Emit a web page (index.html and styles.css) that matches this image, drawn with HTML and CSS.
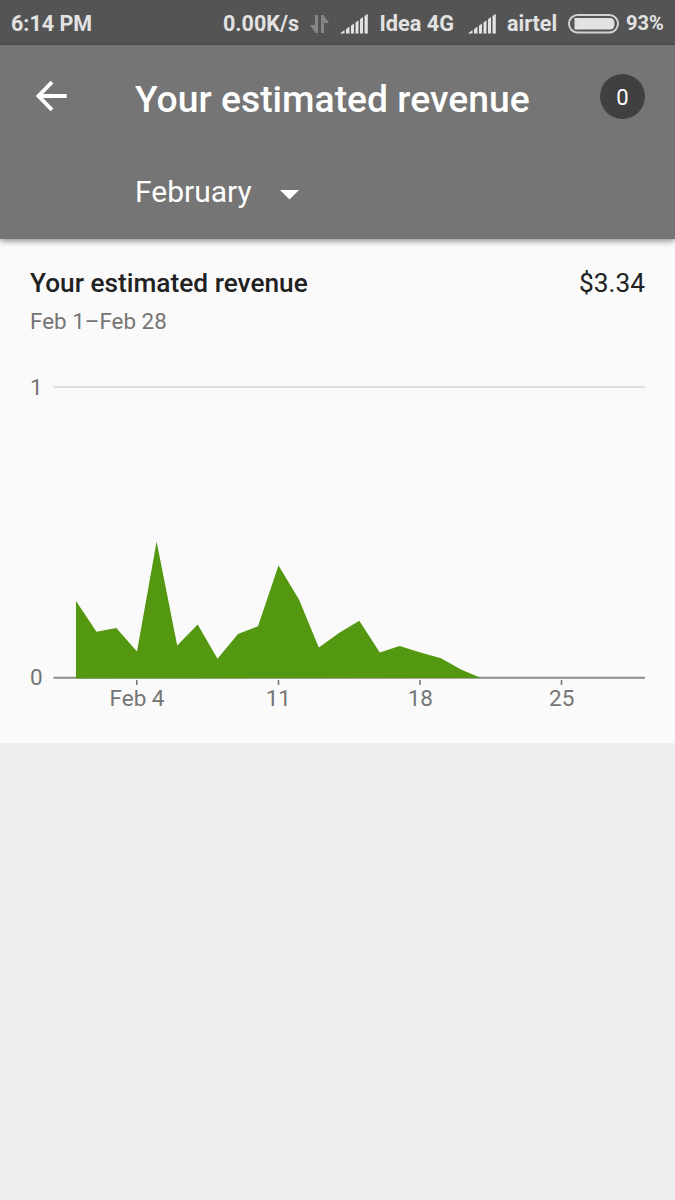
FILE: index.html
```html
<!DOCTYPE html>
<html lang="en">
<head>
<meta charset="utf-8">
<title>Your estimated revenue</title>
<link rel="stylesheet" href="styles.css">
</head>
<body>
<div class="status">
  <span class="clock">6:14 PM</span>
  <span class="rate">0.00K/s</span>
  <svg class="transfer" width="20" height="20" viewBox="0 0 20 20"><path d="M8 1v18H5.500L0 11h5V1zM11 19V1h2.500L19 9h-5v10z"/></svg>
  <svg class="signal" width="28" height="20" viewBox="0 0 28 20"><path d="M0 19.500 4.500 16v3.500zM6 15.300l3.500-2.700v6.900H6zM11 11.800l3-2.400v10.100h-3zM15.500 8.600l3-2.300v13.200h-3zM20 5.200l3-2.300v16.600h-3zM24.500 1.900 27.800 0v19.500h-3.300z"/></svg>
  <span class="carrier">Idea 4G</span>
  <svg class="signal" width="28" height="20" viewBox="0 0 28 20"><path d="M0 19.500 4.500 16v3.500zM6 15.300l3.500-2.700v6.900H6zM11 11.800l3-2.400v10.100h-3zM15.500 8.600l3-2.300v13.200h-3zM20 5.200l3-2.300v16.600h-3zM24.500 1.900 27.800 0v19.500h-3.300z"/></svg>
  <span class="carrier second">airtel</span>
  <svg class="battery" width="51" height="20" viewBox="0 0 51 20"><rect x="1" y="1" width="49" height="17.500" rx="8.700"/><path d="M6.500 4H42q4.500 0 4.500 5.700T42 15.500H6.500z"/></svg>
  <span class="percent">93%</span>
</div>
<header class="appbar">
  <div class="titlebar">
    <svg class="back" width="32" height="32" viewBox="0 0 32 32"><path d="M16 2.200 2.500 16 16 29.800M3 16h27.700"/></svg>
    <h1 class="title">Your estimated revenue</h1>
    <span class="count">0</span>
  </div>
  <div class="month">
    <span>February</span>
    <svg class="caret" width="19" height="10" viewBox="0 0 19 10"><path d="M0 0h19L9.500 9.500z"/></svg>
  </div>
</header>
<main class="card">
  <div class="summary"><h2 class="name">Your estimated revenue</h2><span class="amount">$3.34</span></div>
  <p class="range">Feb 1–Feb 28</p>
  <svg class="chart" width="675" height="404" viewBox="0 339 675 404">
    <path class="grid" d="M53.500 387H645"/>
    <path class="axis" d="M53.500 677.700H645"/>
    <path class="area" d="M76 678.500V601L96.500 631.700 116.300 628 137 651.500 156.600 541.500 177.200 645.500 197.700 624.500 217.500 658.700 238 634 258 626.300 278.500 565.500 299 599.500 318.800 647.600 339 633 359.300 620.800 379.800 652.600 399.500 646 420.500 652.500 441 658.300 461 669.500 481 678z"/>
    <path class="ticks" d="M136.800 680v5M278.500 680v5M420 680v5M561.500 680v5"/>
    <g class="labels">
      <text x="30" y="394.500">1</text>
      <text x="30" y="685">0</text>
      <g text-anchor="middle">
        <text x="137" y="705.700">Feb 4</text>
        <text x="278.300" y="705.700">11</text>
        <text x="420.300" y="705.700">18</text>
        <text x="561.700" y="705.700">25</text>
      </g>
    </g>
  </svg>
</main>
</body>
</html>
```

FILE: styles.css
```css
* { box-sizing: border-box; }
body {
  margin: 0;
  min-height: 1200px;
  background: #eee;
  font-family: Roboto, "Liberation Sans", sans-serif;
}
svg { display: block; flex: none; }
h1, h2, p { margin: 0; }

.status {
  display: flex;
  align-items: center;
  height: 45px;
  padding: 2px 0 0 11px;
  background: #545454;
  color: #e2e2e2;
  font-size: 21.5px;
  font-weight: 700;
  line-height: 43px;
  white-space: nowrap;
}
.clock { width: 212px; }
.rate { width: 87px; }
.transfer { margin-right: 10px; fill: #858585; }
.signal { fill: #e2e2e2; }
.carrier { flex: none; width: 99.500px; padding-left: 11.500px; font-size: 21.7px; }
.carrier.second { width: 72.500px; padding-left: 11.500px; font-size: 21.5px; }
.battery { fill: #e2e2e2; }
.battery rect { fill: none; stroke: #d2d2d2; stroke-width: 2; }
.percent { padding-left: 7px; font-size: 20px; }

.appbar {
  position: relative;
  height: 194px;
  background: #757575;
  color: #fff;
  box-shadow: 0 2px 6px rgba(0, 0, 0, .45);
}
.titlebar {
  display: flex;
  align-items: center;
  height: 103px;
  padding: 0 30px 0 36px;
}
.back { margin-bottom: 2px; fill: none; stroke: #fff; stroke-width: 3.8; }
.title {
  flex: 1;
  padding: 4px 0 0 67px;
  font-size: 37.3px;
  font-weight: 500;
  line-height: 44px;
}
.count {
  width: 45px;
  height: 45px;
  margin-bottom: 1px;
  border-radius: 50%;
  background: #404040;
  font-size: 22px;
  line-height: 47px;
  text-align: center;
}
.month {
  display: flex;
  align-items: center;
  gap: 28px;
  height: 87px;
  padding-left: 135px;
  font-size: 30px;
}
.caret { margin-top: 7px; fill: #fff; }

.card { height: 504px; padding-top: 27px; background: #fafafa; }
.summary {
  display: flex;
  justify-content: space-between;
  padding: 0 30px;
  color: #212121;
  font-size: 26.25px;
  line-height: 34px;
}
.name { font-size: inherit; font-weight: 500; }
.range {
  padding: 6px 30px 2px;
  color: #757575;
  font-size: 22.4px;
  line-height: 31px;
}
.chart { width: 675px; }
.grid { stroke: #dedede; stroke-width: 2; }
.axis { stroke: #8c8c8c; stroke-width: 1.900; }
.area { fill: #539810; }
.ticks { stroke: #757575; stroke-width: 1.500; }
.labels { fill: #757575; font-size: 22.5px; }
```
